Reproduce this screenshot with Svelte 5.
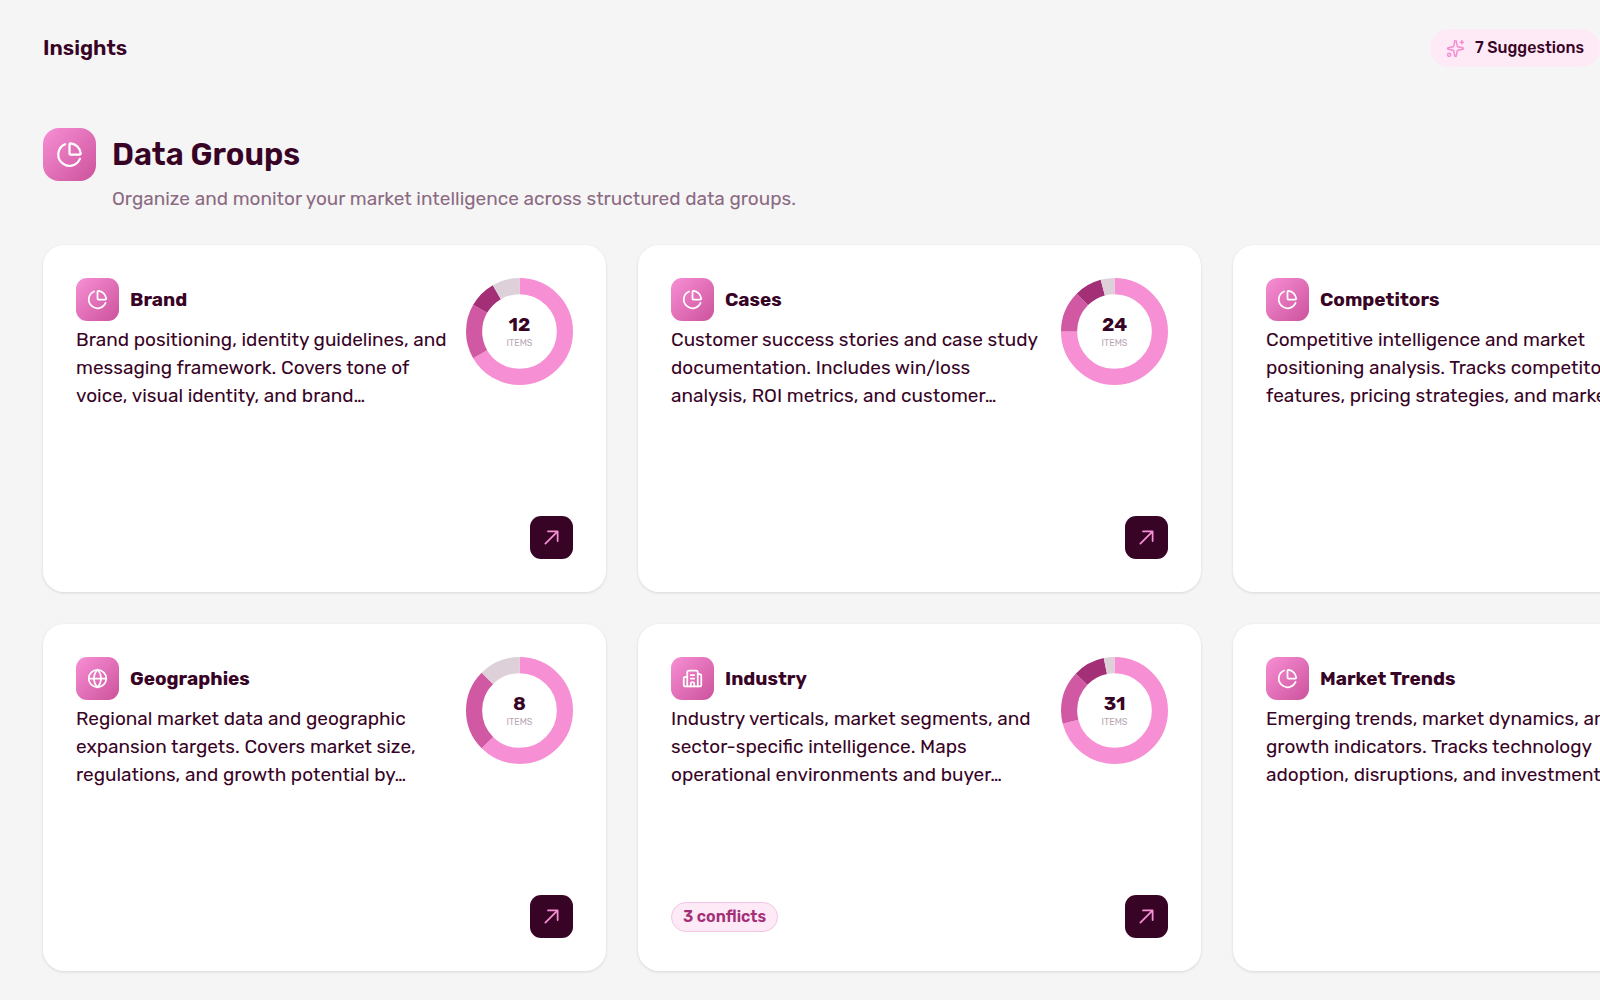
<script>
  const colors = ['#f78fd4', '#d158a3', '#a33077', '#ddd0d9'];

  const groups = [
    {
      name: 'Brand', icon: 'pie', parts: [8, 2, 1, 1],
      lines: ['Brand positioning, identity guidelines, and', 'messaging framework. Covers tone of', 'voice, visual identity, and brand…']
    },
    {
      name: 'Cases', icon: 'pie', parts: [18, 3, 2, 1],
      lines: ['Customer success stories and case study', 'documentation. Includes win/loss', 'analysis, ROI metrics, and customer…']
    },
    {
      name: 'Competitors', icon: 'pie', parts: [12, 3, 2, 1],
      lines: ['Competitive intelligence and market', 'positioning analysis. Tracks competitor', 'features, pricing strategies, and market…']
    },
    {
      name: 'Geographies', icon: 'globe', parts: [5, 2, 0, 1],
      lines: ['Regional market data and geographic', 'expansion targets. Covers market size,', 'regulations, and growth potential by…']
    },
    {
      name: 'Industry', icon: 'building', parts: [22, 5, 3, 1], conflicts: 3,
      lines: ['Industry verticals, market segments, and', 'sector-specific intelligence. Maps', 'operational environments and buyer…']
    },
    {
      name: 'Market Trends', icon: 'pie', parts: [10, 3, 1, 1],
      lines: ['Emerging trends, market dynamics, and', 'growth indicators. Tracks technology', 'adoption, disruptions, and investment…']
    }
  ];

  const total = (parts) => parts.reduce((sum, n) => sum + n, 0);

  function segments(parts) {
    const all = total(parts);
    let before = 0;
    return parts.map((n, i) => {
      const segment = { color: colors[i], share: (n / all) * 100, start: (before / all) * 100 };
      before += n;
      return segment;
    }).filter((s) => s.share > 0);
  }
</script>

{#snippet glyph(name)}
  <svg class="glyph" viewBox="0 0 24 24" aria-hidden="true">
    {#if name === 'pie'}
      <path d="M21 12c.552 0 1.005-.449.95-.998a10 10 0 0 0-8.953-8.951c-.55-.055-.998.398-.998.95v8a1 1 0 0 0 1 1z" />
      <path d="M21.21 15.89A10 10 0 1 1 8 2.83" />
    {:else if name === 'globe'}
      <circle cx="12" cy="12" r="10" />
      <path d="M12 2a14.5 14.5 0 0 0 0 20 14.5 14.5 0 0 0 0-20M2 12h20" />
    {:else if name === 'building'}
      <path d="M10 12h4M10 8h4M14 21v-3a2 2 0 0 0-4 0v3" />
      <path d="M6 10H4a2 2 0 0 0-2 2v7a2 2 0 0 0 2 2h16a2 2 0 0 0 2-2V9a2 2 0 0 0-2-2h-2" />
      <path d="M6 21V5a2 2 0 0 1 2-2h8a2 2 0 0 1 2 2v16" />
    {:else if name === 'sparkles'}
      <path d="M11.017 2.814a1 1 0 0 1 1.966 0l1.051 5.558a2 2 0 0 0 1.594 1.594l5.558 1.051a1 1 0 0 1 0 1.966l-5.558 1.051a2 2 0 0 0-1.594 1.594l-1.051 5.558a1 1 0 0 1-1.966 0l-1.051-5.558a2 2 0 0 0-1.594-1.594l-5.558-1.051a1 1 0 0 1 0-1.966l5.558-1.051a2 2 0 0 0 1.594-1.594z" />
      <path d="M20 2v4M22 4h-4" />
      <circle cx="4" cy="20" r="2" />
    {:else}
      <path d="M5 19 19 5M8 5h11v11" />
    {/if}
  </svg>
{/snippet}

<div class="page">
  <header class="topbar">
    <h1>Insights</h1>
    <button class="suggestions" type="button">
      {@render glyph('sparkles')}
      7 Suggestions
    </button>
  </header>

  <main>
    <section class="intro">
      <span class="tile large">{@render glyph('pie')}</span>
      <h2>Data Groups</h2>
      <p>Organize and monitor your market intelligence across structured data groups.</p>
    </section>

    <div class="grid">
      {#each groups as group}
        <article class="card">
          <div class="summary">
            <div class="about">
              <div class="heading">
                <span class="tile">{@render glyph(group.icon)}</span>
                <h3>{group.name}</h3>
              </div>
              <p class="description">
                {#each group.lines as line}<span>{line} </span>{/each}
              </p>
            </div>
            <div class="donut">
              <svg viewBox="0 0 106 106" aria-hidden="true">
                {#each segments(group.parts) as s}
                  <circle
                    cx="53" cy="53" r="45" pathLength="100"
                    stroke={s.color}
                    stroke-dasharray="{s.share} {100 - s.share}"
                    stroke-dashoffset={-s.start}
                  />
                {/each}
              </svg>
              <div class="count">
                <strong>{total(group.parts)}</strong>
                <small>ITEMS</small>
              </div>
            </div>
          </div>
          <footer>
            {#if group.conflicts}
              <span class="conflicts">{group.conflicts} conflicts</span>
            {/if}
            <button class="open" type="button" aria-label="Open {group.name}">
              {@render glyph('arrow')}
            </button>
          </footer>
        </article>
      {/each}
    </div>
  </main>
</div>

<style>
  :global(body) {
    margin: 0;
    background: #f5f5f5;
    overflow-x: hidden;
  }

  .page {
    padding: 29px 0 29px 43px;
    color: #380426;
    font-family: Rubik, Roboto, 'Liberation Sans', sans-serif;
    font-size: 19px;
    line-height: 28px;
  }

  h1, h2, h3, p { margin: 0; }

  button {
    border: 0;
    font: inherit;
    color: inherit;
    cursor: pointer;
  }

  .glyph {
    display: block;
    width: 21px;
    height: 21px;
    fill: none;
    stroke: currentColor;
    stroke-width: 2;
    stroke-linecap: round;
    stroke-linejoin: round;
  }

  .topbar {
    display: flex;
    align-items: center;
    justify-content: space-between;
  }

  h1 {
    font-size: 21px;
    font-weight: 600;
  }

  .suggestions {
    display: flex;
    align-items: center;
    gap: 10px;
    height: 38px;
    padding: 0 16px;
    border-radius: 19px;
    background: #feeaf7;
    font-size: 16px;
    font-weight: 500;
  }

  .suggestions .glyph {
    width: 19px;
    height: 19px;
    color: #f78fd4;
  }

  .intro {
    display: grid;
    grid-template-columns: auto 1fr;
    column-gap: 16px;
    row-gap: 4px;
    align-items: center;
    margin: 61px 0 32px;
  }

  .intro h2 {
    font-size: 31px;
    font-weight: 600;
    line-height: 40px;
  }

  .intro p {
    grid-column: 2;
    color: #8b6a82;
  }

  .tile {
    display: grid;
    place-items: center;
    flex: none;
    width: 43px;
    height: 43px;
    border-radius: 11px;
    background: linear-gradient(135deg, #f78fd4, #cc529c);
    color: #fff;
  }

  .tile.large {
    width: 53px;
    height: 53px;
    border-radius: 16px;
  }

  .tile.large .glyph {
    width: 27px;
    height: 27px;
  }

  .grid {
    display: grid;
    grid-template-columns: repeat(3, minmax(563px, 1fr));
    gap: 32px;
  }

  .card {
    display: flex;
    flex-direction: column;
    justify-content: space-between;
    box-sizing: border-box;
    min-height: 347px;
    padding: 33px;
    border-radius: 21px;
    background: #fff;
    box-shadow: 0 1px 3px rgba(0, 0, 0, 0.12);
  }

  .summary {
    display: flex;
    justify-content: space-between;
  }

  .heading {
    display: flex;
    align-items: center;
    gap: 11px;
    margin-bottom: 5px;
  }

  h3 {
    font-size: 19px;
    font-weight: 700;
    line-height: 23px;
  }

  .description span {
    display: block;
    white-space: nowrap;
  }

  .donut {
    display: grid;
    flex: none;
    width: 107px;
    height: 107px;
  }

  .donut > * { grid-area: 1 / 1; }

  .donut svg {
    width: 100%;
    height: 100%;
    transform: rotate(-90deg);
  }

  .donut circle {
    fill: none;
    stroke-width: 16;
  }

  .count {
    display: flex;
    flex-direction: column;
    align-items: center;
    justify-content: center;
  }

  .count strong {
    font-size: 19px;
    font-weight: 700;
    line-height: 20px;
  }

  .count small {
    margin-top: 2px;
    color: #b9a5b3;
    font-size: 9px;
    line-height: 12px;
  }

  footer {
    display: flex;
    align-items: center;
  }

  .conflicts {
    padding: 0 11px;
    border: 1px solid #f4c4e3;
    border-radius: 15px;
    background: #feeaf7;
    color: #a33077;
    font-size: 16px;
    font-weight: 600;
  }

  .open {
    display: grid;
    place-items: center;
    width: 43px;
    height: 43px;
    margin-left: auto;
    padding: 0;
    border-radius: 11px;
    background: #380426;
    color: #f78fd4;
  }
</style>
